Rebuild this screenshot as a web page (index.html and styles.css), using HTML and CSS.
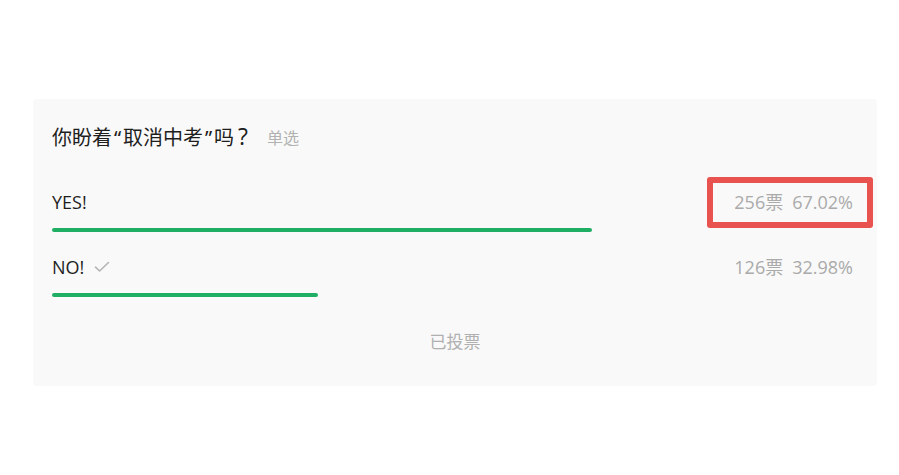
FILE: index.html
```html
<!DOCTYPE html>
<html lang="zh-CN">
<head>
<meta charset="utf-8">
<title>投票</title>
<link rel="stylesheet" href="styles.css">
</head>
<body>
<div class="card">
  <div class="title"><span>你盼着<span class="q">“</span>取消中考<span class="q">”</span>吗<span class="qm">?</span></span><span class="type">单选</span></div>
  <div class="option option-first">
    <div class="head">
      <span class="label">YES!</span>
      <span class="stats"><span>256票</span><span class="pct">67.02%</span><span class="mark"></span></span>
    </div>
    <div class="track"><div class="bar" style="width:67.02%"></div></div>
  </div>
  <div class="option">
    <div class="head">
      <span class="label">NO!<svg class="check" width="16" height="12" viewBox="0 0 16 12"><path d="M1.5 6.2 L5.6 10 L14.5 1.5" fill="none" stroke="#b4b4b4" stroke-width="1.6" stroke-linecap="round" stroke-linejoin="round"/></svg></span>
      <span class="stats"><span>126票</span><span class="pct">32.98%</span></span>
    </div>
    <div class="track"><div class="bar" style="width:32.98%"></div></div>
  </div>
  <div class="footer">已投票</div>
</div>
</body>
</html>
```
FILE: styles.css
```css
html, body {
  margin: 0;
  padding: 0;
  background: #ffffff;
}
body {
  font-family: "Open Sans", "Noto Sans CJK SC", sans-serif;
  color: #1e1e1e;
}
.card {
  box-sizing: border-box;
  margin: 99px 0 0 33px;
  width: 844px;
  height: 287px;
  padding: 25px 19px 0;
  background: #f9f9f9;
  border-radius: 4px;
}
.title {
  font-size: 20px;
  line-height: 28px;
  height: 28px;
  color: #1e1e1e;
  display: flex;
  align-items: center;
}
.q {
  display: inline-block;
  width: 11px;
  text-align: center;
  font-family: "Noto Sans", sans-serif;
}
.qm {
  display: inline-block;
  margin-left: 4px;
  font-size: 23px;
  line-height: 20px;
  font-family: "Open Sans", sans-serif;
}
.type {
  margin-left: 19px;
  font-size: 16px;
  color: #b2b2b2;
}
.option {
  margin-top: 21px;
}
.option-first {
  margin-top: 36px;
}
.head {
  display: flex;
  justify-content: space-between;
  align-items: center;
  height: 28px;
  padding-right: 5px;
}
.label {
  font-size: 18px;
  line-height: 28px;
  color: #1e1e1e;
  display: flex;
  align-items: center;
}
.check {
  margin-left: 10px;
}
.stats {
  position: relative;
  font-size: 18px;
  line-height: 28px;
  color: #aaaaaa;
  display: flex;
}
.pct {
  margin-left: 9px;
}
.mark {
  position: absolute;
  left: -27px;
  right: -20px;
  top: -11px;
  bottom: -12px;
  border: 6px solid #e8524f;
  border-radius: 3px;
}
.track {
  margin-top: 12px;
  height: 4px;
}
.bar {
  height: 4px;
  background: #1fae64;
  border-radius: 2px;
}
.footer {
  margin-top: 33px;
  text-align: center;
  font-size: 17px;
  line-height: 24px;
  color: #b0b0b0;
}
```
